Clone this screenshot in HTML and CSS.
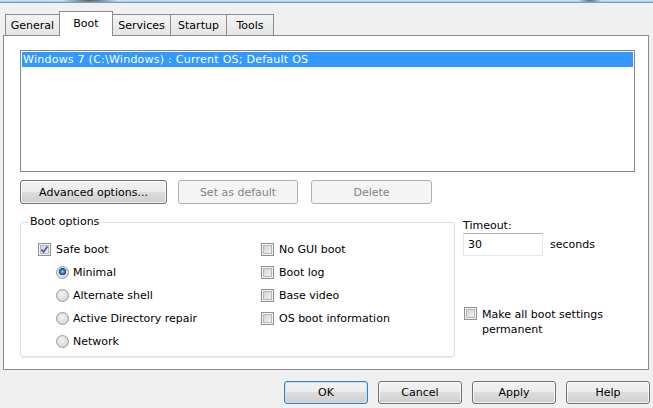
FILE: index.html
```html
<!DOCTYPE html>
<html>
<head>
<meta charset="utf-8">
<link rel="stylesheet" href="styles.css">
</head>
<body>
<div class="topframe"></div>
<div class="tabs">
  <div class="tab t-general first">General</div>
  <div class="tab t-boot active">Boot</div>
  <div class="tab t-services">Services</div>
  <div class="tab t-startup">Startup</div>
  <div class="tab t-tools">Tools</div>
</div>
<div class="panel">
  <div class="listbox">
    <div class="item sel">Windows 7 (C:\Windows) : Current OS; Default OS</div>
  </div>
  <div class="btnrow">
    <div class="btn adv">Advanced options...</div>
    <div class="btn dis sad">Set as default</div>
    <div class="btn dis del">Delete</div>
  </div>
  <div class="lower">
    <fieldset class="group">
      <legend>Boot options</legend>
      <div class="grid">
        <div class="opt"><span class="cb"><svg class="chk" viewBox="0 0 11 11" width="11" height="11"><polyline points="2.5,5.5 4.5,8 8.5,2.5" fill="none" stroke="#3b56a6" stroke-width="1.6"/></svg></span>Safe boot</div>
        <div class="opt"><span class="cb"></span>No GUI boot</div>
        <div class="opt ind"><span class="rb on"></span>Minimal</div>
        <div class="opt"><span class="cb"></span>Boot log</div>
        <div class="opt ind"><span class="rb"></span>Alternate shell</div>
        <div class="opt"><span class="cb"></span>Base video</div>
        <div class="opt ind"><span class="rb"></span>Active Directory repair</div>
        <div class="opt"><span class="cb"></span>OS boot information</div>
        <div class="opt ind"><span class="rb"></span>Network</div>
      </div>
    </fieldset>
    <div class="side">
      <div class="tlabel">Timeout:</div>
      <div class="trow"><div class="input">30</div><span class="secs">seconds</span></div>
      <div class="perm"><span class="cb"></span><span class="permtext">Make all boot settings<br>permanent</span></div>
    </div>
  </div>
</div>
<div class="footer">
  <div class="btn fbtn ok">OK</div>
  <div class="btn fbtn">Cancel</div>
  <div class="btn fbtn">Apply</div>
  <div class="btn fbtn">Help</div>
</div>
</body>
</html>
```
FILE: styles.css
```css
html, body {
  margin: 0;
  padding: 0;
}
body {
  width: 653px;
  height: 408px;
  overflow: hidden;
  background: #f0f0f0;
  font-family: "DejaVu Sans", sans-serif;
  font-size: 11px;
  color: #000;
}
.topframe {
  height: 2px;
  border-bottom: 1px solid #7c9cbf;
  background:
    radial-gradient(ellipse 28px 4px at 90px 0, rgba(70,60,50,0.85), rgba(70,60,50,0) 100%),
    radial-gradient(ellipse 12px 3px at 590px 0, rgba(70,60,50,0.8), rgba(70,60,50,0) 100%),
    linear-gradient(#d4ebf8, #94c6e8);
}
.tabs {
  display: flex;
  align-items: flex-end;
  height: 25px;
  margin-top: 8px;
  padding-left: 5px;
  margin-bottom: -1px;
  position: relative;
  z-index: 1;
}
.tab {
  box-sizing: border-box;
  height: 21px;
  margin-bottom: 1px;
  margin-left: -1px;
  border: 1px solid #898c95;
  border-bottom: 0;
  background: linear-gradient(#f4f4f4, #e4e4e4);
  display: flex;
  align-items: center;
  justify-content: center;
  padding-top: 1px;
}
.tab.first { margin-left: 0; }
.t-general { width: 55px; }
.t-boot { width: 54px; }
.t-services { width: 59px; }
.t-startup { width: 57px; }
.t-tools { width: 48px; }
.tab.active {
  height: 25px;
  margin-bottom: 0;
  background: #fff;
  align-items: flex-start;
  padding-top: 5px;
  position: relative;
  z-index: 2;
}
.panel {
  box-sizing: border-box;
  margin-left: 3px;
  width: 646px;
  height: 335px;
  border: 1px solid #898c95;
  background: #fff;
  padding: 14px 0 0 16px;
}
.listbox {
  box-sizing: border-box;
  width: 615px;
  height: 122px;
  border: 1px solid #828790;
  padding: 1px;
}
.item {
  height: 15px;
  line-height: 15px;
  padding-left: 1px;
  white-space: nowrap;
  letter-spacing: 0.25px;
}
.item.sel {
  background: #3399ff;
  color: #fff;
}
.btnrow {
  display: flex;
  margin-top: 8px;
}
.btn {
  box-sizing: border-box;
  height: 24px;
  border: 1px solid #707070;
  border-radius: 3px;
  background: linear-gradient(#f2f2f2 0%, #ebebeb 50%, #dddddd 50%, #cfcfcf 100%);
  box-shadow: inset 0 0 0 1px rgba(255,255,255,0.75);
  display: flex;
  align-items: center;
  justify-content: center;
  white-space: nowrap;
}
.adv { width: 147px; }
.sad { width: 120px; margin-left: 11px; }
.del { width: 121px; margin-left: 13px; }
.btn.dis {
  border-color: #adb2b5;
  background: #f4f4f4;
  color: #838383;
  box-shadow: none;
}
.lower {
  display: flex;
  margin-top: 11px;
}
.group {
  box-sizing: border-box;
  width: 435px;
  height: 142px;
  margin: 0;
  padding: 0;
  border: 1px solid #d5dfe5;
  border-radius: 3px;
  box-shadow: 0 1px 0 #e6ecf0;
}
.group legend {
  margin-left: 7px;
  padding: 0 2px;
  line-height: 14px;
}
.grid {
  display: grid;
  grid-template-columns: 223px 1fr;
  grid-auto-rows: 23px;
  margin-top: 8px;
  padding-left: 17px;
}
.opt {
  display: flex;
  align-items: center;
  gap: 5px;
  white-space: nowrap;
  padding-top: 1px;
}
.opt.ind {
  padding-left: 18px;
  gap: 4px;
}
.cb {
  box-sizing: border-box;
  flex: none;
  display: block;
  width: 13px;
  height: 13px;
  border: 1px solid #8e8f8f;
  background: linear-gradient(135deg, #c6cbd2 0%, #e4e6e9 55%, #f7f7f7 100%);
  box-shadow: inset 0 0 0 1px #f4f4f4, inset 0 0 0 2px #b3b8be;
}
.chk {
  display: block;
}
.rb {
  box-sizing: border-box;
  flex: none;
  display: block;
  width: 13px;
  height: 13px;
  border-radius: 50%;
  border: 1px solid #979b9f;
  background: radial-gradient(circle at 45% 40%, #f4f4f4 0%, #dcdcdc 60%, #c9c9c9 100%);
}
.rb.on {
  background:
    radial-gradient(circle at 50% 42%, #9fdcf8 0px, #3c8fcf 1.6px, #0f4680 3.4px, rgba(15,70,128,0) 3.9px),
    radial-gradient(circle at 45% 40%, #f4f4f4 0%, #dcdcdc 60%, #c9c9c9 100%);
}
.side {
  display: flex;
  flex-direction: column;
  margin-left: 8px;
}
.tlabel {
  margin-top: 4px;
  line-height: 14px;
}
.trow {
  display: flex;
  align-items: center;
  margin-top: 0;
  gap: 7px;
}
.input {
  box-sizing: border-box;
  width: 80px;
  height: 23px;
  border: 1px solid;
  border-color: #abadb3 #e3e9ef #e3e9ef #e2e3ea;
  background: #fff;
  padding-left: 4px;
  display: flex;
  align-items: center;
}
.perm {
  display: flex;
  align-items: flex-start;
  gap: 5px;
  margin-top: 50px;
  padding-left: 1px;
}
.perm .cb { margin-top: 1px; }
.permtext {
  line-height: 15px;
  padding-top: 1px;
}
.footer {
  display: flex;
  justify-content: flex-end;
  gap: 10px;
  margin-top: 11px;
  padding-right: 3px;
}
.fbtn {
  width: 84px;
  height: 23px;
}
.btn.ok {
  border-color: #3c7fb1;
  box-shadow: inset 0 0 0 1px #b9e3f7;
}
```
